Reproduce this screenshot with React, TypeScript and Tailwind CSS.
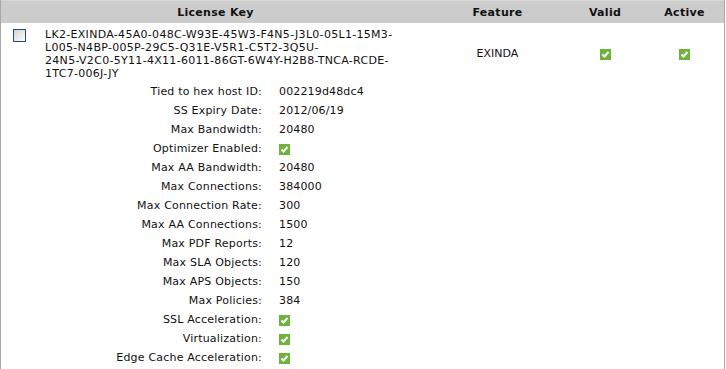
const licenseKeyLines = [
  "LK2-EXINDA-45A0-048C-W93E-45W3-F4N5-J3L0-05L1-15M3-",
  "L005-N4BP-005P-29C5-Q31E-V5R1-C5T2-3Q5U-",
  "24N5-V2C0-5Y11-4X11-6011-86GT-6W4Y-H2B8-TNCA-RCDE-",
  "1TC7-006J-JY",
];

type Detail = { label: string; value?: string; check?: boolean };

const details: Detail[] = [
  { label: "Tied to hex host ID:", value: "002219d48dc4" },
  { label: "SS Expiry Date:", value: "2012/06/19" },
  { label: "Max Bandwidth:", value: "20480" },
  { label: "Optimizer Enabled:", check: true },
  { label: "Max AA Bandwidth:", value: "20480" },
  { label: "Max Connections:", value: "384000" },
  { label: "Max Connection Rate:", value: "300" },
  { label: "Max AA Connections:", value: "1500" },
  { label: "Max PDF Reports:", value: "12" },
  { label: "Max SLA Objects:", value: "120" },
  { label: "Max APS Objects:", value: "150" },
  { label: "Max Policies:", value: "384" },
  { label: "SSL Acceleration:", check: true },
  { label: "Virtualization:", check: true },
  { label: "Edge Cache Acceleration:", check: true },
];

const CheckIcon = () => (
  <svg width="11" height="11" viewBox="0 0 11 11" className="block">
    <rect width="11" height="11" fill="#6eb33c" />
    <polyline points="2.5,5.5 4.5,7.5 8.5,3" fill="none" stroke="#ffffff" strokeWidth="2" />
  </svg>
);

export default function App() {
  return (
    <div className="w-[726px] h-[369px] bg-white overflow-hidden font-['DejaVu_Sans',Verdana,sans-serif] text-[11px] text-[#111]">
      <div className="w-[725px] border-l border-r border-[#a8a8a8]">
        {/* Header */}
        <div className="grid grid-cols-[429px_135px_80px_1fr] h-[23px] pt-[2px] bg-[#cccccc] border-t border-[#d8d8d8] font-bold tracking-[0.3px] items-center text-center">
          <div>License Key</div>
          <div>Feature</div>
          <div>Valid</div>
          <div>Active</div>
        </div>

        {/* License row */}
        <div className="grid grid-cols-[429px_135px_80px_1fr] items-center pt-[5px]">
          <div className="flex">
            <div className="w-[44px] pl-[12px] pt-[1px]">
              <div className="w-[13px] h-[13px] border border-[#1a4d7e] bg-gradient-to-br from-[#d2d2ce] to-white" />
            </div>
            <div className="leading-[13px] tracking-[0.3px]">
              {licenseKeyLines.map((l) => (
                <div key={l}>{l}</div>
              ))}
            </div>
          </div>
          <div className="text-center">EXINDA</div>
          <div className="flex justify-center">
            <CheckIcon />
          </div>
          <div className="flex justify-center">
            <CheckIcon />
          </div>
        </div>

        {/* Details */}
        <div className="pt-[3px] pb-[4px]">
          {details.map((d) => (
            <div key={d.label} className="flex items-center h-[19px]">
              <div className="w-[261px] text-right tracking-[0.2px]">{d.label}</div>
              <div className="pl-[17px] tracking-[0.15px]">{d.check ? <CheckIcon /> : d.value}</div>
            </div>
          ))}
        </div>
      </div>
      <div className="w-[725px] h-[10px] bg-[#ececec]" />
    </div>
  );
}
